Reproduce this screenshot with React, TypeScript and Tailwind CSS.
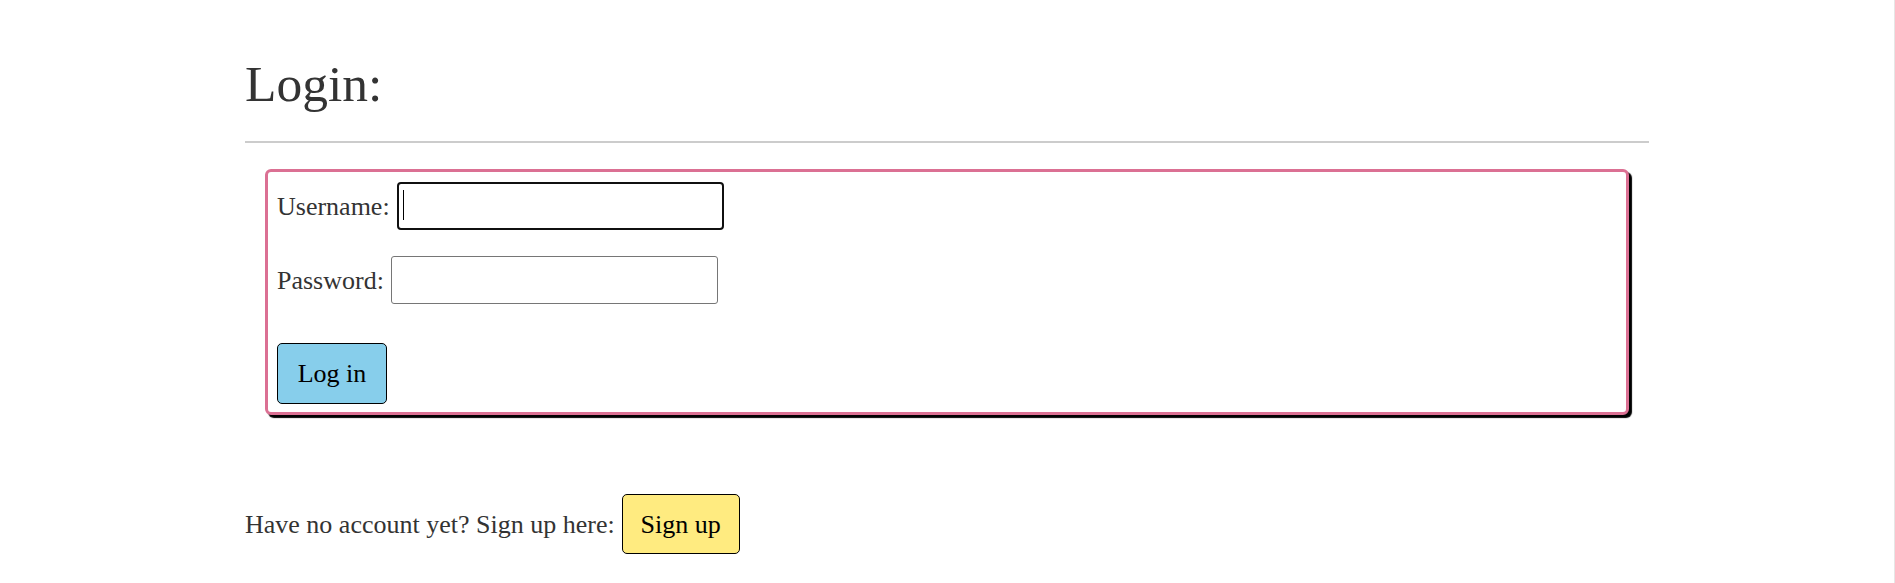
import React from "react";

export default function App() {
  return (
    <div
      className="min-h-[583px] w-full bg-white border-r border-[#e6e6e6] text-[#333]"
      style={{ fontFamily: '"Liberation Serif", "Times New Roman", serif' }}
    >
      <div className="mx-auto w-[1404px] pt-[54px]">
        <h1 className="m-0 text-[51.5px] leading-[59px] font-normal text-[#333]">Login:</h1>
        <hr className="mt-[28px] border-0 border-t-2 border-[#cccccc]" />
        <form
          className="mx-[20px] mt-[26px] rounded-[6px] border-[3px] border-[#db7093] bg-white pl-[9px] pt-[10px] pb-[8px] shadow-[3px_3px_1px_#000]"
          onSubmit={(e) => e.preventDefault()}
        >
          <div className="flex items-center text-[26px] leading-[29px]">
            <label htmlFor="username">Username:</label>
            <div className="relative ml-[7px]">
              <input
                id="username"
                type="text"
                className="block h-[48px] w-[327px] rounded-[4px] border-2 border-[#101010] bg-white outline-none caret-transparent"
              />
              <span className="pointer-events-none absolute left-[6px] top-[8px] h-[30px] w-[1px] bg-black" />
            </div>
          </div>
          <div className="mt-[26px] flex items-center text-[26px] leading-[29px]">
            <label htmlFor="password">Password:</label>
            <input
              id="password"
              type="password"
              className="ml-[7px] block h-[48px] w-[327px] rounded-[3px] border border-[#767676] bg-white outline-none"
            />
          </div>
          <button
            type="submit"
            className="mt-[39px] flex h-[61px] w-[110px] items-center justify-center rounded-[5px] border border-black bg-[#87ceeb] text-[26px] leading-[29px] text-black"
          >
            Log in
          </button>
        </form>
        <div className="mt-[79px] flex items-center text-[26px] leading-[29px] text-[#333]">
          <span>Have no account yet? Sign up here:</span>
          <button
            type="button"
            className="ml-[7px] flex h-[60px] w-[118px] items-center justify-center rounded-[5px] border border-black bg-[#ffeb80] text-[26px] leading-[29px] text-black"
          >
            Sign up
          </button>
        </div>
      </div>
    </div>
  );
}
